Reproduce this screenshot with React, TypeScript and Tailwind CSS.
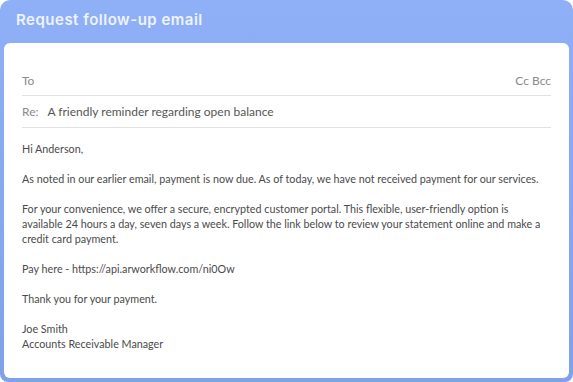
export default function App() {
  const body = [
    ['Hi Anderson,'],
    ['As noted in our earlier email, payment is now due. As of today, we have not received payment for our services.'],
    [
      'For your convenience, we offer a secure, encrypted customer portal. This flexible, user-friendly option is',
      'available 24 hours a day, seven days a week. Follow the link below to review your statement online and make a',
      'credit card payment.',
    ],
    ['Pay here - https://api.arworkflow.com/ni0Ow'],
    ['Thank you for your payment.'],
    ['Joe Smith', 'Accounts Receivable Manager'],
  ];

  return (
    <div className="w-[573px] h-[382px] bg-white">
      <div className="flex flex-col w-full h-full rounded-t-[10px] rounded-b-[8px] bg-gradient-to-b from-[#8fb0f6] to-[#7fa1ea]">
        <div className="h-[43px] flex items-center px-4 pb-[2px]">
          <h1 className="font-['Inter',sans-serif] font-semibold text-[15px] text-[#eef3ff] tracking-[0.5px]">
            Request follow-up email
          </h1>
        </div>

        <div className="flex-1 mx-1 mb-1 bg-white rounded-[6px] px-[18px] pt-[23px] font-['Lato',sans-serif]">
          <div className="h-[30px] flex items-center justify-between border-b border-[#e2e2e2] text-[12px] text-[#8a8a8a]">
            <span>To</span>
            <span>Cc Bcc</span>
          </div>
          <div className="h-[32px] flex items-center gap-[9px] border-b border-[#e2e2e2] text-[12px]">
            <span className="text-[#8a8a8a]">Re:</span>
            <span className="text-[#555]">A friendly reminder regarding open balance</span>
          </div>

          <div className="pt-[13px] flex flex-col gap-[15px] text-[10.75px] leading-[15px] text-[#4a4a4a]">
            {body.map((para, i) => (
              <p key={i}>
                {para.map((line, j) => (
                  <span key={j} className="block whitespace-nowrap">
                    {line}
                  </span>
                ))}
              </p>
            ))}
          </div>
        </div>
      </div>
    </div>
  );
}
